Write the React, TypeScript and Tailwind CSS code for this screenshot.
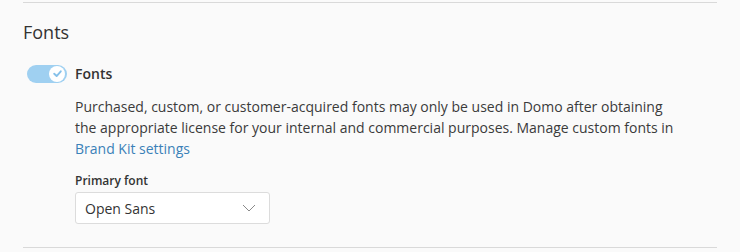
import { useState } from "react";

function Toggle({ on, onChange }: { on: boolean; onChange: (v: boolean) => void }) {
  return (
    <button
      type="button"
      onClick={() => onChange(!on)}
      className={`relative h-[18px] w-10 shrink-0 rounded-full ${on ? "bg-[#9fd0f1]" : "bg-[#d4d4d4]"}`}
    >
      <span
        className={`absolute top-[1px] flex h-4 w-4 items-center justify-center rounded-full bg-white ${on ? "left-[22px]" : "left-[2px]"}`}
      >
        {on && (
          <svg width="11" height="11" viewBox="0 0 10 10" fill="none">
            <path d="M2 5.2 L4.2 7.3 L8 3" stroke="#86c1ea" strokeWidth="1.7" strokeLinecap="round" strokeLinejoin="round" />
          </svg>
        )}
      </span>
    </button>
  );
}

export default function App() {
  const [enabled, setEnabled] = useState(true);

  return (
    <div className="h-[252px] w-[740px] bg-[#fafafa] px-[23px] pt-[2px] font-['Open_Sans',sans-serif] text-[#333]">
      <div className="border-t border-[#d9d9d9]" />
      <h2 className="mt-[17px] text-[18px] leading-6 font-normal text-[#333]">Fonts</h2>

      <div className="mt-[19px] flex items-center gap-[8px] pl-[4px]">
        <Toggle on={enabled} onChange={setEnabled} />
        <span className="text-[14px] font-semibold text-[#333]">Fonts</span>
      </div>

      <div className="mt-[12px] pl-[52px]">
        <p className="text-[14px] leading-[21px] text-[#3b3b3b]">
          Purchased, custom, or customer-acquired fonts may only be used in Domo after obtaining
          <br />
          the appropriate license for your internal and commercial purposes. Manage custom fonts in
          <br />
          <a href="#" className="text-[#3a81b8]">Brand Kit settings</a>
        </p>

        <label className="mt-[14px] block text-[12px] font-semibold leading-4 text-[#333]">Primary font</label>
        <button
          type="button"
          className="mt-[3px] flex h-8 w-[195px] items-center justify-between rounded-[3px] border border-[#dcdcdc] bg-white pr-[13px] pl-[9px] text-[14px] text-[#333]"
        >
          <span>Open Sans</span>
          <svg width="14" height="8" viewBox="0 0 14 8" fill="none">
            <path d="M1 1 L7 7 L13 1" stroke="#8a8a8a" strokeWidth="1" />
          </svg>
        </button>
      </div>

      <div className="mt-[23px] border-t border-[#d9d9d9]" />
    </div>
  );
}
